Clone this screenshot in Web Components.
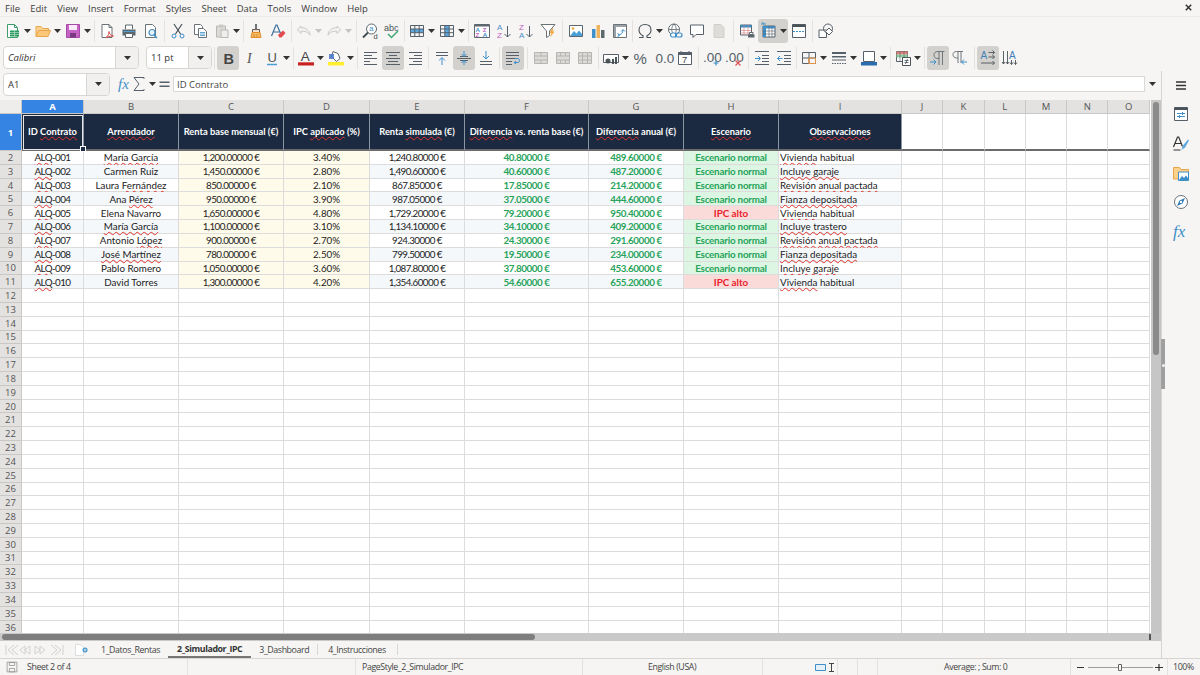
<!DOCTYPE html>
<html lang="en">
<head>
<meta charset="utf-8">
<title>2_Simulador_IPC</title>
<style>
html, body { margin: 0; padding: 0; height: 100%; overflow: hidden; }
body { font-family: "Open Sans", "Liberation Sans", sans-serif; background: #f6f5f3; }
</style>
</head>
<body>
<calc-app>
  <menu-bar></menu-bar>
  <tool-bar>
    <tool-btn i="new" dd></tool-btn><tool-btn i="open" dd></tool-btn><tool-btn i="save" dd></tool-btn><tool-sep w="4"></tool-sep>
    <tool-btn i="pdf"></tool-btn><tool-btn i="print"></tool-btn><tool-btn i="preview"></tool-btn><tool-sep></tool-sep>
    <tool-btn i="cut"></tool-btn><tool-btn i="copy"></tool-btn><tool-btn i="paste" dd></tool-btn><tool-sep w="4"></tool-sep>
    <tool-btn i="brush"></tool-btn><tool-btn i="clear"></tool-btn><tool-sep w="4"></tool-sep>
    <tool-btn i="undo" dd off></tool-btn><tool-btn i="redo" dd off></tool-btn><tool-sep w="6"></tool-sep>
    <tool-btn i="find"></tool-btn><tool-btn i="spell"></tool-btn><tool-sep w="3"></tool-sep>
    <tool-btn i="rows" dd></tool-btn><tool-btn i="cols" dd></tool-btn><tool-sep></tool-sep>
    <tool-btn i="sort"></tool-btn><tool-btn i="asc"></tool-btn><tool-btn i="desc"></tool-btn><tool-btn i="filter"></tool-btn><tool-sep w="6"></tool-sep>
    <tool-btn i="image"></tool-btn><tool-btn i="chart"></tool-btn><tool-btn i="pivot"></tool-btn><tool-sep w="3"></tool-sep>
    <tool-btn i="omega" dd></tool-btn><tool-btn i="link"></tool-btn><tool-btn i="comment"></tool-btn><tool-btn i="headers"></tool-btn><tool-sep w="6"></tool-sep>
    <tool-btn i="area"></tool-btn><tool-btn i="freeze" dd on></tool-btn><tool-btn i="split"></tool-btn><tool-sep></tool-sep>
    <tool-btn i="shapes"></tool-btn>
  </tool-bar>
  <tool-bar>
    <combo-box w="136" arrow="23" italic>Calibri</combo-box><tool-gap></tool-gap>
    <combo-box w="66" arrow="23">11 pt</combo-box><tool-sep></tool-sep>
    <tool-btn i="bold" on></tool-btn><tool-btn i="italic"></tool-btn><tool-btn i="under" dd></tool-btn><tool-sep w="4"></tool-sep>
    <tool-btn i="fcolor" dd></tool-btn><tool-btn i="bcolor" dd></tool-btn><tool-sep></tool-sep>
    <tool-btn i="left"></tool-btn><tool-btn i="center" on></tool-btn><tool-btn i="right"></tool-btn><tool-sep></tool-sep>
    <tool-btn i="top"></tool-btn><tool-btn i="middle" on></tool-btn><tool-btn i="bottom"></tool-btn><tool-sep></tool-sep>
    <tool-btn i="wrap" on></tool-btn><tool-sep w="6"></tool-sep>
    <tool-btn i="merge"></tool-btn><tool-btn i="merge2"></tool-btn><tool-btn i="merge3"></tool-btn><tool-sep w="4"></tool-sep>
    <tool-btn i="money" dd></tool-btn><tool-btn i="percent"></tool-btn><tool-btn i="num"></tool-btn><tool-btn i="date"></tool-btn><tool-sep></tool-sep>
    <tool-btn i="addd"></tool-btn><tool-btn i="deld"></tool-btn><tool-sep w="6"></tool-sep>
    <tool-btn i="indent"></tool-btn><tool-btn i="outdent"></tool-btn><tool-sep w="3"></tool-sep>
    <tool-btn i="borders" dd></tool-btn><tool-btn i="bstyle" dd></tool-btn><tool-btn i="bcol" dd></tool-btn><tool-sep w="4"></tool-sep>
    <tool-btn i="cond" dd></tool-btn><tool-sep></tool-sep>
    <tool-btn i="ltr" on></tool-btn><tool-btn i="rtl"></tool-btn><tool-sep w="6"></tool-sep>
    <tool-btn i="horiz" on></tool-btn><tool-btn i="vert"></tool-btn>
  </tool-bar>
  <work-area>
    <formula-bar cell="A1" value="ID Contrato"></formula-bar>
    <sheet-grid></sheet-grid>
    <sheet-tabs></sheet-tabs>
    <side-bar slot="side"></side-bar>
  </work-area>
  <status-bar></status-bar>
</calc-app>

<script>
// toolbar + sidebar icons, all on a 16x16 box
const LINES = (ys, x1, x2, c) => ys.map(y => `<path d="M${x1} ${y}H${x2}" stroke="${c}"/>`).join('');
const TXT = (x, y, s, c, t, w) => `<text x="${x}" y="${y}" font-size="${s}" fill="${c}" font-family="Liberation Sans" font-weight="${w || 400}">${t}</text>`;
const GRID = (c) => `<path d="M1.5 2.5h13v11h-13zM1.5 6h13M1.5 9.7h13M5.8 2.5v11M10.2 2.5v11" fill="none" stroke="${c}"/>`;
const ICONS = {
  new: `<path d="M2.5 1.5h7l3 3v10h-10z" fill="#fff" stroke="#3f9d6f"/><path d="M9.5 1.5v3h3" fill="none" stroke="#3f9d6f"/><path d="M5 7.500h9v6h-9z" fill="#2b9a5e"/><path d="M5 9.500h9M5 11.500h9M9.500 7.500v6" stroke="#cfe9da" stroke-width=".6"/>`,
  open: `<path d="M1 13.500V3.500h5l1.500 2h6v2" fill="#fbd28f" stroke="#e9a54c"/><path d="M1 13.500l2.500-6h12l-2.500 6z" fill="#fbc677" stroke="#e9a54c"/>`,
  save: `<path d="M1.500 1.500h13v13h-13z" fill="#c564c5" stroke="#a848a8"/><path d="M4 2h8v5H4z" fill="#fbeafb"/><path d="M5 10h6v4.500H5z" fill="#7d3a84"/>`,
  pdf: `<path d="M3 1.500h7l3 3v10H3z" fill="#fff" stroke="#6b7377"/><path d="M10 1.500v3h3" fill="none" stroke="#6b7377"/><path d="M7 14.500c2-1 3-4 3-6 0 2 1.500 4 4.500 4.500-2 0-5 .5-7.500 1.500z" fill="none" stroke="#d9534f"/>`,
  print: `<path d="M4.500 6V2h7v4" fill="#fff" stroke="#5d676e"/><path d="M1.500 6.500h13v6h-13z" fill="#5d676e"/><path d="M4.500 10.500h7v4h-7z" fill="#fff" stroke="#5d676e"/><path d="M2.500 8.500h11" stroke="#4a9fd6"/>`,
  preview: `<path d="M2.500 1.500h7l3 3v10h-10z" fill="#fff" stroke="#6b7377"/><circle cx="9" cy="9.500" r="3" fill="#e8f3fb" stroke="#3f8fc9" stroke-width="1.200"/><path d="M11 12l3 3" stroke="#3f8fc9" stroke-width="1.500"/>`,
  cut: `<path d="M4 1l6.500 10M12 1L5.500 11" stroke="#3d4a52" stroke-width="1.100" fill="none"/><circle cx="4" cy="13" r="2" fill="none" stroke="#3f8fc9"/><circle cx="12" cy="13" r="2" fill="none" stroke="#3f8fc9"/>`,
  copy: `<path d="M2.500 1.500h6l2 2v8h-8z" fill="#fff" stroke="#6b7377"/><path d="M6.500 5.500h5l3 3v6h-8z" fill="#fff" stroke="#6b7377"/><path d="M8 9.500h5M8 11h5M8 12.500h5" stroke="#3f8fc9" stroke-width=".8"/>`,
  paste: `<path d="M2.500 3h9v11h-9z" fill="#dcdbd8" stroke="#b9b8b5"/><path d="M5 1.500h4v3H5z" fill="#c9c8c5"/><path d="M7 7h7v7.500H7z" fill="#efeeec" stroke="#b9b8b5"/>`,
  brush: `<path d="M7 1h2v6H7z" fill="#6b7377"/><path d="M4.500 6.500h7v3h-7z" fill="#f0e3cf" stroke="#6b5b4a"/><path d="M4 9.500h8l1 5H3z" fill="#f5b562" stroke="#e08f2b"/><path d="M6 11v3M9 11v3" stroke="#e08f2b"/>`,
  clear: `<path d="M1.500 13L6 2h1l4 9.500M3.500 9h6" fill="none" stroke="#3a6f9e" stroke-width="1.200"/><path d="M8 12l5-4.500 2.500 2.500-4 4.500H9.500z" fill="#e5484d"/>`,
  undo: `<path d="M5 2L1.500 6 5 9.500V7.200c4 0 7 .5 9 4-.5-5-4-7.500-9-7.500z" fill="#f4f3f1" stroke="#c9c8c5" transform="translate(0 1)"/>`,
  redo: `<path d="M11 2l3.500 4L11 9.500V7.200c-4 0-7 .5-9 4 .5-5 4-7.500 9-7.500z" fill="#f4f3f1" stroke="#c9c8c5" transform="translate(0 1)"/>`,
  find: `<circle cx="9.500" cy="6" r="5" fill="#fff" stroke="#5d676e"/><path d="M6 9.500l-5 5" stroke="#3d4a52" stroke-width="1.800"/>` + TXT(7.300, 8.300, 7.500, '#3f8fc9', 'a') + TXT(11.500, 15.500, 7.500, '#3d4a52', 'd'),
  spell: TXT(0, 8, 9, '#4a5358', 'abc') + `<path d="M4 11l3.500 3.500L14 8" fill="none" stroke="#3fa877" stroke-width="1.500"/>`,
  rows: `<path d="M1.500 6h13v3.700h-13z" fill="#5ba7e0"/>` + GRID('#55606a'),
  cols: `<path d="M5.800 2.500h4.400v11H5.800z" fill="#5ba7e0"/>` + GRID('#55606a'),
  sort: `<path d="M.500 1.500h15v13H.500z" fill="#fff" stroke="#5d676e"/><path d="M.500 2h15v1.500H.500z" fill="#5d676e"/>` + TXT(1.500, 9, 6.200, '#4a8fca', 'A', 700) + TXT(1.500, 14.300, 6.200, '#bd5fc4', 'Z', 700) + TXT(8.800, 9, 6.200, '#bd5fc4', 'Z', 700) + TXT(8.800, 14.300, 6.200, '#4a8fca', 'A', 700),
  asc: TXT(1, 7, 8, '#4a8fca', 'A') + TXT(1, 15, 8, '#bd5fc4', 'Z') + `<path d="M11.500 3v11M8.500 11l3 3 3-3" fill="none" stroke="#55606a"/>`,
  desc: TXT(1, 7, 8, '#bd5fc4', 'Z') + TXT(1, 15, 8, '#4a8fca', 'A') + `<path d="M11.500 3v11M8.500 11l3 3 3-3" fill="none" stroke="#55606a"/>`,
  filter: `<path d="M1 1.500h14L9.500 8v4.500l-3 2V8z" fill="#fff" stroke="#6b7377"/><path d="M12 5.500L9.500 10h2L10 14.500l4.500-6h-2l1-3z" fill="#f0a63d"/>`,
  image: `<path d="M1.500 2.500h13v11h-13z" fill="#fff" stroke="#5d676e"/><circle cx="5" cy="5.500" r="1.300" fill="#f0a63d"/><path d="M2 13l4-5 2.500 2.500 2.500-3 3 3.500v2z" fill="#4a9fd6"/>`,
  chart: `<path d="M2 6h3.500v9H2z" fill="#3f8fc9"/><path d="M6.500 2H10v13H6.500z" fill="#f0b45c"/><path d="M11 7h3.500v8H11z" fill="#5d676e"/>`,
  pivot: `<path d="M1.500 1.500h13v13h-13z" fill="#fff" stroke="#6b7377"/><path d="M2 2h12v2H2zM2 2h2v12H2z" fill="#9aa2a7"/><path d="M6 12c3 0 5-2 5-5M9 8.500L11 6.500l2 2M5.500 10l2 2-2 2" fill="none" stroke="#3f8fc9"/>`,
  omega: `<path d="M2 14.500h4v-1.700C3.500 11.500 2 9.500 2 7c0-3.500 2.500-5.500 6-5.500s6 2 6 5.500c0 2.500-1.500 4.500-4 5.800v1.700h4" fill="none" stroke="#4a5358" stroke-width="1.100"/>`,
  link: `<circle cx="7" cy="6.500" r="5.500" fill="#fff" stroke="#5d676e"/><path d="M1.500 6.500h11M7 1c-3 3-3 8 0 11M7 1c3 3 3 8 0 11" fill="none" stroke="#5d676e" stroke-width=".8"/><rect x="3.500" y="10" width="6" height="4" rx="2" fill="#fff" stroke="#3f8fc9" stroke-width="1.200"/><rect x="8.500" y="10" width="6.500" height="4" rx="2" fill="none" stroke="#3f8fc9" stroke-width="1.200"/>`,
  comment: `<path d="M1.500 2h13v9.500H7L4 14.500v-3H1.500z" fill="#fff" stroke="#55606a"/>`,
  headers: `<path d="M3 1.500h7l3 3v10H3z" fill="#dddcd9" stroke="#d0cfcc"/>`,
  area: `<path d="M1.500 2h11v10h-11z" fill="#fff" stroke="#55606a"/><path d="M1.500 2h11v2.500h-11z" fill="#3f8fc9"/><path d="M1.500 7.500h11M1.500 10h11M5 2v10M9 2v10" stroke="#c77" stroke-width=".6"/><path d="M9 11.500h6.500v3H9z" fill="#5d676e"/><path d="M10.500 9.500h3.500v2h-3.500z" fill="#fff" stroke="#5d676e"/>`,
  freeze: `<g transform="translate(-1 -1)"><path d="M3 4h12v11H3z" fill="#fff" stroke="#55606a"/><path d="M3 4h12v2.500H3zM3 4h3v11H3z" fill="#3f8fc9"/><path d="M3 9h12M3 12h12M9 4v11M12 4v11" stroke="#55606a" stroke-width=".6"/><path d="M1 2h5M3 0v2" stroke="#3f8fc9"/></g>`,
  split: `<path d="M1.500 1.500h13v13h-13z" fill="#fff" stroke="#55606a"/><path d="M1.500 1.500h13v2.500h-13z" fill="#4a5358"/><path d="M2 8.500h12" stroke="#3f8fc9" stroke-dasharray="2 1"/>`,
  shapes: `<path d="M1 7h7.500v7.500H1z" fill="#fff" stroke="#55606a"/><circle cx="10" cy="5.500" r="4.500" fill="none" stroke="#55606a"/><path d="M11 5l3.500 3.500-3.500 3.500-3.500-3.500z" fill="#fff" stroke="#55606a"/>`,

  bold: TXT(3.500, 13.500, 14.500, '#454545', 'B', 700),
  italic: `<text x="5" y="13" font-size="14" fill="#555" font-family="Liberation Serif" font-style="italic">I</text>`,
  under: TXT(3.500, 11.500, 13, '#555', 'U') + `<path d="M3 14.500h10" stroke="#4a9fd6" stroke-width="1.500"/>`,
  fcolor: TXT(2.800, 11, 13.500, '#444', 'A') + `<path d="M0 12.300h16v3.200H0z" fill="#c9211e"/>`,
  bcolor: `<path d="M5 1.500l5 2 2 5-3.500 3-5-5z" fill="#fff" stroke="#5d676e"/><path d="M1 4h5v5H1z" fill="#3f6fc9" opacity=".8"/><path d="M0 12h16v3.500H0z" fill="#ffee2e"/>`,
  left: LINES([2.500, 5.500, 8.500, 11.500, 14.500], 1, 14, '#55606a') + `<path d="M9 5.500h5M7 11.500h7" stroke="#f6f5f3"/>`,
  center: LINES([2.500, 5.500, 8.500, 11.500, 14.500], 1, 15, '#55606a') + `<path d="M1 5.500h3M12 5.500h3M1 11.500h2M13 11.500h2" stroke="#d3d1cd"/>`,
  right: LINES([2.500, 5.500, 8.500, 11.500, 14.500], 2, 15, '#55606a') + `<path d="M2 5.500h5M2 11.500h4" stroke="#f6f5f3"/>`,
  top: LINES([2.500, 5.500], 2, 14, '#55606a') + `<path d="M8 15V8M5 10.500l3-3 3 3" fill="none" stroke="#3f8fc9"/>`,
  middle: LINES([8.500], 1, 15, '#55606a') + LINES([6.500, 10.500], 4, 12, '#55606a') + `<path d="M8 1v5M5.500 4l2.500 2.500L10.500 4M8 15v-4M5.500 13L8 10.500l2.500 2.500" fill="none" stroke="#3f8fc9"/>`,
  bottom: LINES([11.500, 14.500], 2, 14, '#55606a') + `<path d="M8 1v7.500M5 6l3 3 3-3" fill="none" stroke="#3f8fc9"/>`,
  wrap: LINES([2.500, 5.500], 1, 14, '#55606a') + LINES([8.500], 1, 10, '#55606a') + LINES([11.500, 14.500], 1, 7, '#55606a') + `<path d="M10 8.500h3c2 0 2 4 0 4H9.500M11 11l-2 1.500 2 1.500" fill="none" stroke="#3f8fc9"/>`,
  merge: `<path d="M1.500 2.500h13v11h-13z" fill="#dcdbd8" stroke="#b5b4b1"/><path d="M1.500 6h13M1.500 10h13M8 2.500V6M8 10v3.500" stroke="#b5b4b1"/>`,
  merge2: `<path d="M1.500 2.500h13v11h-13z" fill="#dcdbd8" stroke="#b5b4b1"/><path d="M1.500 6h13M5.500 2.500V6M10.500 2.500V6M5.500 10v3.500M10.500 10v3.500M1.500 10h13" stroke="#b5b4b1"/>`,
  merge3: `<path d="M1.500 2.500h13v11h-13z" fill="#dcdbd8" stroke="#b5b4b1"/><path d="M1.500 6h13M1.500 10h13M5.500 2.500v11M10.500 2.500v11" stroke="#b5b4b1"/>`,
  money: `<path d="M.500 4.500h15v8H.500z" fill="#fff" stroke="#55606a"/><circle cx="5" cy="11" r="2.500" fill="#4a5358"/><path d="M9 9h2v5H9zM12 7h2v7h-2z" fill="#4a5358"/>`,
  percent: TXT(.500, 13.500, 15, '#55606a', '%'),
  num: TXT(.500, 13, 13.500, '#55606a', '0.0'),
  date: `<path d="M1.500 2.500h13v12h-13z" fill="#fff" stroke="#55606a"/><path d="M1.500 2.500h13v2h-13zM4 1v2M12 1v2" fill="#55606a" stroke="#55606a"/>` + TXT(5, 13, 9.500, '#444', '7'),
  addd: TXT(-1, 12, 13.500, '#55606a', '.00') + `<path d="M12 10.500v5M9.500 13h5" stroke="#3f8fc9" stroke-width="1.200"/>`,
  deld: TXT(-1, 12, 13.500, '#55606a', '.00') + `<path d="M9.500 10.500l5 5M14.500 10.500l-5 5" stroke="#d9534f" stroke-width="1.200"/>`,
  indent: LINES([1.500, 14.500], 1, 15, '#55606a') + LINES([5.500, 8.500, 11.500], 8, 15, '#55606a') + `<path d="M1 8.500h5M4 6l2.500 2.500L4 11" fill="none" stroke="#3f8fc9"/>`,
  outdent: LINES([1.500, 14.500], 1, 15, '#55606a') + LINES([5.500, 8.500, 11.500], 8, 15, '#55606a') + `<path d="M1.500 8.500h5M4 6L1.500 8.500 4 11" fill="none" stroke="#3f8fc9"/>`,
  borders: `<path d="M1.500 2.500h13v11h-13zM8 2.500v11M1.500 8h13" fill="none" stroke="#55606a"/><path d="M8 8v5.500M8 8h6.500v5.500H8z" fill="none" stroke="#e2924a"/>`,
  bstyle: `<path d="M1 2h14v2H1zM1 6h14v1.500H1z" fill="#55606a"/><path d="M1 10h14" stroke="#55606a"/><path d="M1 13.500h14" stroke="#55606a" stroke-dasharray="1.500 1"/>`,
  bcol: `<path d="M2.500 1.500h11v10h-11z" fill="#fff" stroke="#55606a"/><path d="M0 12h16v3.500H0z" fill="#2a6cad"/>`,
  cond: `<path d="M1.500 1.500h11v10h-11z" fill="#fff" stroke="#55606a"/><path d="M1.500 1.500h11v3h-11z" fill="#e0817c"/><path d="M1.500 4.500h11v3h-11z" fill="#8fcb9b"/><path d="M5 1.500v10M9 1.500v10" stroke="#55606a" stroke-width=".6"/><path d="M7.500 7.500h8v8h-8z" fill="#fff" stroke="#4a5358"/><path d="M9.500 10.500h4M9.500 12.500h4M12.500 9l-2 5" stroke="#4a5358" stroke-width=".8"/>`,
  ltr: `<path d="M9 15V1.500M12.500 15V1.500M14.500 1.500H8C5 1.500 4 3 4 5s1 3.500 4 3.500h1" fill="none" stroke="#6f777c"/><path d="M0 12h5.500M3.500 9.500L6 12l-2.500 2.500" fill="none" stroke="#3f8fc9"/>`,
  rtl: `<path d="M5 13V1.500M8 13V1.500M10 1.500H3.500C1 1.500 0 3 0 4.500S1 8 3.500 8H5" fill="none" stroke="#6f777c" transform="translate(1)"/><path d="M15 12H9.500M12 9.500L9.500 12l2.500 2.500" fill="none" stroke="#3f8fc9"/>`,
  horiz: TXT(.500, 8.500, 10, '#3f7fb8', 'A') + `<path d="M8.500 2.500h6M12.500.500l2 2-2 2M8.500 7h6M12.500 5l2 2-2 2M1 13h13.500M12.500 11l2 2-2 2" fill="none" stroke="#4a5358" stroke-width=".9"/>`,
  vert: TXT(7, 8.500, 10, '#3f7fb8', 'A') + `<path d="M1.500 1v13M0 12l1.500 2L3 12M5.500 1v13M4 12l1.500 2L7 12M9.500 10v4.500M8 12.500l1.500 2 1.500-2M13.500 10v4.500M12 12.500l1.500 2 1.500-2" fill="none" stroke="#4a5358" stroke-width=".9"/>`,

  props: `<path d="M1.500 1.500h13v13h-13z" fill="#fff" stroke="#55606a"/><path d="M1.500 1.500h13v2.500h-13z" fill="#4a5358"/><path d="M4 7.500h8M4 10.500h8" stroke="#3f8fc9"/><path d="M9.500 6v3M6.500 9v3" stroke="#3f8fc9"/>`,
  styles: `<path d="M.500 11L4.500 1h1.200l3.800 9.500M2 7.500h6" fill="none" stroke="#333" stroke-width="1.200"/><path d="M.500 14h7" stroke="#333"/><path d="M15 3.500l-5 6-1.500 4.500 3.500-2.500 4-7z" fill="#5ba7e0"/>`,
  gallery: `<path d="M.500 14V2.500h6l1.500 2h7.500V14z" fill="#fad08a" stroke="#e9a54c"/><path d="M5.500 7h10v8.500h-10z" fill="#fff" stroke="#3f8fc9"/><path d="M6 15l3-4 2 2 2-2.500 2 2.500v2z" fill="#3f8fc9"/>`,
  nav: `<circle cx="8" cy="8" r="6.500" fill="#fff" stroke="#6b7377"/><path d="M12 4L9.500 9.500 4 12l2.500-5.500z" fill="#2f79b5"/><circle cx="8" cy="8" r="1.200" fill="#fff"/>`,
  fx: `<text x="0" y="13.500" font-size="17" fill="#3f8fc9" font-family="Liberation Serif" font-style="italic">fx</text>`,
  fxBar: `<text x="1" y="13" font-size="15" fill="#3f8fc9" font-family="Liberation Serif" font-style="italic">fx</text>`,
  sigma: `<path d="M13 3V1.500H3L8 8l-5 6.500h10V13" fill="none" stroke="#55606a" stroke-width="1"/>`,
  equals: `<path d="M2.500 5.500h10v1.600h-10zM2.500 9.500h10v1.600h-10z" fill="#55606a"/>`,
  saveDoc: `<path d="M1.500 1.500h13v13h-13z" fill="#f6f5f3" stroke="#8d8d8d"/><path d="M4.500 2h7v4h-7zM4.500 10h7v4.500h-7z" fill="none" stroke="#8d8d8d"/>`
};
const svgIcon = (name, size = 16) => `<svg xmlns="http://www.w3.org/2000/svg" width="${size}" height="${size}" viewBox="0 0 16 16" style="display:block;overflow:visible">${ICONS[name]}</svg>`;

const ARROW = `<svg width="7" height="4" viewBox="0 0 7 4" style="display:block"><path d="M0 0h7L3.500 4z" fill="#333"/></svg>`;

class CalcApp extends HTMLElement {
  constructor() {
    super();
    this.attachShadow({ mode: 'open' });
    this.shadowRoot.innerHTML = `<style>
      :host { display: flex; flex-direction: column; width: 1200px; height: 675px; overflow: hidden; background: #f6f5f3; color: #333; }
    </style><slot></slot>`;
  }
}

class MenuBar extends HTMLElement {
  constructor() {
    super();
    this.attachShadow({ mode: 'open' });
    const items = ['File', 'Edit', 'View', 'Insert', 'Format', 'Styles', 'Sheet', 'Data', 'Tools', 'Window', 'Help'];
    this.shadowRoot.innerHTML = `<style>
      :host { display: flex; align-items: center; height: 17px; flex: none; border-bottom: 1px solid #ecebe9; box-sizing: border-box; padding-left: 5px; gap: 10.100px; font: 9.500px "Open Sans", sans-serif; color: #3c3c3c; position: relative; }
      #close { position: absolute; right: 8px; top: 4px; }
    </style>${items.map(t => `<span>${t}</span>`).join('')}
    <svg id="close" width="7" height="7" viewBox="0 0 7 7"><path d="M.8.8l5.400 5.400M6.200.8L.8 6.200" stroke="#333" stroke-width="1.500"/></svg>`;
  }
}

class ToolBar extends HTMLElement {
  constructor() {
    super();
    this.attachShadow({ mode: 'open' });
    this.shadowRoot.innerHTML = `<style>
      :host { display: flex; align-items: center; height: 27px; flex: none; box-sizing: border-box; padding-left: 2px; }
      ::slotted(*) { flex: none; }
    </style><slot></slot>`;
  }
}

class ToolBtn extends HTMLElement {
  constructor() {
    super();
    this.attachShadow({ mode: 'open' });
  }
  connectedCallback() {
    const dd = this.hasAttribute('dd');
    const off = this.hasAttribute('off');
    this.shadowRoot.innerHTML = `<style>
      :host { display: flex; align-items: center; height: 24px; border-radius: 3px; width: ${dd ? 30 : 22}px; }
      :host([on]) { background: #d3d1cd; }
      #i { width: 22px; display: flex; justify-content: center; }
      #d { width: 7px; opacity: ${off ? .25 : 1}; }
    </style><div id="i">${svgIcon(this.getAttribute('i'))}</div>${dd ? `<div id="d">${ARROW}</div>` : ''}`;
  }
}

class ToolSep extends HTMLElement {
  constructor() {
    super();
    this.attachShadow({ mode: 'open' });
  }
  connectedCallback() {
    const w = this.getAttribute('w') || 5;
    this.shadowRoot.innerHTML = `<style>
      :host { display: flex; justify-content: center; width: ${w}px; height: 22px; }
      div { width: 1px; background: #e3e2df; }
    </style><div></div>`;
  }
}

class ToolGap extends HTMLElement {
  constructor() {
    super();
    this.attachShadow({ mode: 'open' });
    this.shadowRoot.innerHTML = `<style>:host { display: block; width: 6px; }</style>`;
  }
}

class ComboBox extends HTMLElement {
  constructor() {
    super();
    this.attachShadow({ mode: 'open' });
  }
  connectedCallback() {
    const it = this.hasAttribute('italic');
    this.shadowRoot.innerHTML = `<style>
      :host { display: flex; height: 23px; width: ${this.getAttribute('w')}px; box-sizing: border-box; border: 1px solid #d8d6d3; border-radius: 4px; background: #fff; font: ${it ? 'italic ' : ''}9.500px "Open Sans", sans-serif; color: #333; margin-left: 1px; }
      #t { flex: 1; display: flex; align-items: center; padding-left: 4px; }
      #a { width: ${this.getAttribute('arrow')}px; display: flex; align-items: center; justify-content: center; border-left: 1px solid #d8d6d3; background: #f1f0ee; border-radius: 0 3px 3px 0; box-sizing: border-box; }
    </style><div id="t"><slot></slot></div><div id="a">${ARROW}</div>`;
  }
}

class WorkArea extends HTMLElement {
  constructor() {
    super();
    this.attachShadow({ mode: 'open' });
    this.shadowRoot.innerHTML = `<style>
      :host { display: grid; grid-template-columns: 1162px 38px; flex: 1; min-height: 0; }
      #main { display: flex; flex-direction: column; min-height: 0; border-right: 1px solid #d6d5d2; }
    </style><div id="main"><slot></slot></div><slot name="side"></slot>`;
  }
}

class FormulaBar extends HTMLElement {
  constructor() {
    super();
    this.attachShadow({ mode: 'open' });
  }
  connectedCallback() {
    this.shadowRoot.innerHTML = `<style>
      :host { display: flex; align-items: center; height: 26px; flex: none; box-sizing: border-box; padding-left: 2px; font: 9.500px "Open Sans", sans-serif; color: #444; }
      #name { margin-right: 8px; }
      .b { width: 14px; display: flex; justify-content: center; flex: none; }
      .d { width: 7px; flex: none; }
      #in { width: 972px; height: 16px; flex: none; box-sizing: border-box; margin-left: 1px; border: 1px solid #dad9d6; background: #fff; display: flex; align-items: center; padding-left: 3px; }
      #end { margin-left: 4px; }
    </style>
    <combo-box id="name" w="107" arrow="23">${this.getAttribute('cell')}</combo-box>
    <div class="b">${svgIcon('fxBar')}</div>
    <div class="b">${svgIcon('sigma')}</div>
    <div class="d" style="margin:0 1px 0 3px">${ARROW}</div>
    <div class="b" style="margin:0 0 0 1px">${svgIcon('equals')}</div>
    <div id="in">${this.getAttribute('value')}</div>
    <div id="end">${ARROW}</div>`;
  }
}

// *word* marks what the spell checker flagged
const mark = s => s.replace(/\*([^*]+)\*/g, '<u>$1</u>');
const HEADS = ['ID *Contrato*', '*Arrendador*', 'Renta base mensual (€)', 'IPC *aplicado* (%)', 'Renta *simulada* (€)', '*Diferencia* vs. renta base (€)', '*Diferencia* anual (€)', '*Escenario*', '*Observaciones*'];
const ROWS = [
  ['*ALQ*-001', '*María García*', '1,200.00000 €', '3.40%', '1,240.80000 €', '40.80000 €', '489.60000 €', 'n', '*Vivienda* habitual'],
  ['*ALQ*-002', 'Carmen Ruiz', '1,450.00000 €', '2.80%', '1,490.60000 €', '40.60000 €', '487.20000 €', 'n', '*Incluye garaje*'],
  ['*ALQ*-003', 'Laura *Fernández*', '850.00000 €', '2.10%', '867.85000 €', '17.85000 €', '214.20000 €', 'n', '*Revisión anual pactada*'],
  ['*ALQ*-004', 'Ana *Pérez*', '950.00000 €', '3.90%', '987.05000 €', '37.05000 €', '444.60000 €', 'n', '*Fianza depositada*'],
  ['*ALQ*-005', 'Elena Navarro', '1,650.00000 €', '4.80%', '1,729.20000 €', '79.20000 €', '950.40000 €', 'a', '*Vivienda* habitual'],
  ['*ALQ*-006', '*María García*', '1,100.00000 €', '3.10%', '1,134.10000 €', '34.10000 €', '409.20000 €', 'n', '*Incluye trastero*'],
  ['*ALQ*-007', 'Antonio *López*', '900.00000 €', '2.70%', '924.30000 €', '24.30000 €', '291.60000 €', 'n', '*Revisión anual pactada*'],
  ['*ALQ*-008', '*José Martínez*', '780.00000 €', '2.50%', '799.50000 €', '19.50000 €', '234.00000 €', 'n', '*Fianza depositada*'],
  ['*ALQ*-009', 'Pablo Romero', '1,050.00000 €', '3.60%', '1,087.80000 €', '37.80000 €', '453.60000 €', 'n', '*Incluye garaje*'],
  ['*ALQ*-010', 'David Torres', '1,300.00000 €', '4.20%', '1,354.60000 €', '54.60000 €', '655.20000 €', 'a', '*Vivienda* habitual']
];
const COLS = 'ABCDEFGHIJKLMNO'.split('');

class SheetGrid extends HTMLElement {
  constructor() {
    super();
    this.attachShadow({ mode: 'open' });
    let h = `<div class="corner"></div>`;
    COLS.forEach((c, i) => { h += `<div class="ch ${i === 0 ? 'sel' : ''}">${c}</div>`; });
    h += `<div class="rh sel top">1</div>`;
    for (let i = 0; i < 15; i++) {
      h += i < 9 ? `<div class="c head ${i === 0 ? 'cur' : ''}"><span>${mark(HEADS[i])}</span>${i === 0 ? '<i></i>' : ''}</div>` : `<div class="c hb"></div>`;
    }
    for (let r = 2; r <= 36; r++) {
      h += `<div class="rh">${r}</div>`;
      const d = ROWS[r - 2];
      for (let i = 0; i < 15; i++) {
        if (!d || i > 8) { h += `<div class="c"></div>`; continue; }
        let cls = r % 2 ? 'alt' : '';
        let t = d[i];
        if (i === 2 || i === 3) cls = 'yel';
        if (i === 0 || i === 2 || i === 4) cls += ' tight';
        if (i === 5 || i === 6) cls += ' gr';
        if (i === 7) { cls = t === 'n' ? 'ok' : 'hi'; t = t === 'n' ? 'Escenario normal' : 'IPC alto'; }
        if (i === 8) cls += ' lft';
        h += `<div class="c ${cls}"><span>${mark(t)}</span></div>`;
      }
    }
    this.shadowRoot.innerHTML = `<style>
      :host { display: block; position: relative; flex: 1; min-height: 0; margin-top: 3px; overflow: hidden; background: #fff; }
      #g { display: grid; grid-template-columns: 22px 62px 95px 105px 86px 95px 124px 95px 95px 123px repeat(6, 41.300px); grid-template-rows: 14px 37px repeat(35, 13.820px); font: 9.800px Lato, "Liberation Sans", sans-serif; color: #222; width: 1151px; overflow: hidden; }
      .corner { background: #eeedeb; border-right: 1px solid #c9c8c5; border-bottom: 1px solid #c9c8c5; }
      .ch, .rh { display: flex; align-items: center; justify-content: center; box-sizing: border-box; background: #e3e2e0; color: #555; border-right: 1px solid #c9c8c5; border-bottom: 1px solid #c9c8c5; font: 9.500px "Open Sans", sans-serif; }
      .sel { background: #3584e4; color: #fff; font-weight: 700; }
      .c { box-sizing: border-box; border-right: 1px solid #dcdcdc; border-bottom: 1px solid #dcdcdc; display: flex; align-items: center; justify-content: center; white-space: nowrap; min-width: 0; }
      .head { background: #1b2a41; color: #fff; font-weight: 700; font-size: 9.300px; border-right: 1px solid #8c95a3; border-bottom: 2px solid #6b6b6b; position: relative; }
      .hb { border-bottom: 2px solid #6b6b6b; }
      .cur { outline: 1px solid #e8e8e8; outline-offset: -2px; }
      .cur i { position: absolute; right: -3px; bottom: -3px; width: 4px; height: 4px; background: #1b2a41; border: 1px solid #fff; z-index: 2; }
      .alt { background: #f4f8fb; }
      .yel { background: #fffbea; }
      .tight { letter-spacing: -.55px; }
      .gr { color: #27a35a; font-weight: 700; letter-spacing: -.4px; }
      .ok { background: #dcf6e3; color: #27a35a; font-weight: 700; letter-spacing: -.2px; }
      .hi { background: #fbdada; color: #e8222a; font-weight: 700; }
      .lft { justify-content: flex-start; padding-left: 1px; }
      u { text-decoration: underline wavy #e0332e 1px; text-underline-offset: 1px; text-decoration-skip-ink: none; }
      #vt { position: absolute; left: 1151px; top: 0; bottom: 0; width: 10px; background: #c6c6c6; }
      #vb { position: absolute; left: 2px; top: 2px; width: 6px; height: 253px; background: #8a8a8a; border-radius: 3px; }
      #ht { position: absolute; left: 0; bottom: 0; width: 1161px; height: 8px; background: #c9c9c9; }
      #hb { position: absolute; left: 2px; top: 1px; width: 533px; height: 6px; background: #7e7e7e; border-radius: 3px; }
      #hm { position: absolute; left: 1149px; top: 1px; width: 2px; height: 6px; background: #555; }
    </style><div id="g">${h}</div>
    <div id="vt"><div id="vb"></div></div>
    <div id="ht"><div id="hb"></div><div id="hm"></div></div>`;
  }
}

class SheetTabs extends HTMLElement {
  constructor() {
    super();
    this.attachShadow({ mode: 'open' });
    this.shadowRoot.innerHTML = `<style>
      :host { display: flex; align-items: stretch; height: 17px; flex: none; font: 8.800px "Open Sans", sans-serif; letter-spacing: -.4px; color: #444; box-sizing: border-box; padding-left: 5px; }
      #nav { width: 61px; display: flex; align-items: center; }
      #add { width: 27px; display: flex; align-items: center; padding-left: 1px; box-sizing: border-box; margin-left: 8px; }
      .t { display: flex; align-items: center; height: 100%; box-sizing: border-box; white-space: nowrap; }
      .on { font-weight: 700; color: #333; padding: 0 9px; margin: 0 8px -1px 8px; border-bottom: 2px solid #777; }
      .s { width: 1px; height: 11px; align-self: center; background: #d8d7d4; margin-right: 10px; }
    </style>
    <div id="nav"><svg width="60" height="12" viewBox="0 0 60 12" fill="none" stroke="#d2d1ce"><path d="M1 1v10M9 1L3 6l6 5M13 1L7 6l6 5M20 2l-5 4 5 4v-8zM25 2l-5 4 5 4zM35 2l5 4-5 4zM30 2l5 4-5 4zM46 1l6 5-6 5M50 1l6 5-6 5M58 1v10"/></svg></div>
    <div id="add"><svg width="14" height="12" viewBox="0 0 14 12"><path d="M.500.500h5l3 3v8h-8z" fill="#fff" stroke="#ddd"/><circle cx="10" cy="6" r="2.500" fill="#3f8fc9"/><path d="M8.500 6h3M10 4.500v3" stroke="#fff" stroke-width=".7"/></svg></div>
    <div class="t">1_Datos_Rentas</div>
    <div class="t on">2_Simulador_IPC</div>
    <div class="t" style="padding-right:8px">3_Dashboard</div><div class="s"></div>
    <div class="t" style="padding-right:11px">4_Instrucciones</div><div class="s"></div>`;
  }
}

class SideBar extends HTMLElement {
  constructor() {
    super();
    this.attachShadow({ mode: 'open' });
    const list = ['props', 'styles', 'gallery', 'nav', 'fx'];
    this.shadowRoot.innerHTML = `<style>
      :host { display: flex; flex-direction: column; align-items: center; position: relative; padding-top: 7px; gap: 13.250px; box-sizing: border-box; }
      #burger { height: 14px; margin-bottom: 1px; display: flex; align-items: center; }
      #grip { position: absolute; left: -1px; top: 268px; width: 4px; height: 50px; background: #9f9f9f; }
      #dot { position: absolute; left: 0px; top: 293px; width: 3px; height: 3px; background: #f4f4f4; border-radius: 50%; }
    </style>
    <div id="grip"></div><div id="dot"></div>
    <div id="burger"><svg width="10" height="9" viewBox="0 0 10 9"><path d="M0 1h10M0 4.500h10M0 8h10" stroke="#333" stroke-width="1.300"/></svg></div>
    ${list.map(n => svgIcon(n)).join('')}`;
  }
}

class StatusBar extends HTMLElement {
  constructor() {
    super();
    this.attachShadow({ mode: 'open' });
    this.shadowRoot.innerHTML = `<style>
      :host { display: flex; align-items: center; height: 17px; flex: none; box-sizing: border-box; border-top: 1px solid #d6d5d2; font: 8.800px "Open Sans", sans-serif; letter-spacing: -.4px; color: #444; }
      .f { height: 100%; box-sizing: border-box; border-right: 1px solid #e3e2df; display: flex; align-items: center; flex: none; white-space: nowrap; }
    </style>
    <div class="f" style="width:188px;padding-left:6px;gap:9px">${svgIcon('saveDoc', 12)}<span>Sheet 2 of 4</span></div>
    <div class="f" style="width:168px"></div>
    <div class="f" style="width:227px;padding-left:6px">PageStyle_2_Simulador_IPC</div>
    <div class="f" style="width:180px;padding-left:65px">English (USA)</div>
    <div class="f" style="width:75px;padding-left:52px;gap:3px">
      <svg width="11" height="7" viewBox="0 0 11 7"><path d="M.5.500h10v6H.5z" fill="#e6f0f8" stroke="#3f8fc9"/></svg>
      <svg width="5" height="9" viewBox="0 0 5 9"><path d="M0 .500h5M0 8.500h5M2.500 0v9" stroke="#444"/></svg></div>
    <div class="f" style="width:20px"></div>
    <div class="f" style="width:20px"></div>
    <div class="f" style="width:193px;padding-left:66px">Average: ; Sum: 0</div>
    <div class="f" style="width:97px;padding-left:6px">
      <svg width="90" height="9" viewBox="0 0 90 9"><path d="M0 4.500h7M78 4.500h8M82 1v7" stroke="#333" stroke-width="1.200"/><path d="M11 4.500h65" stroke="#9d9d9d"/><path d="M41.500 1.500h3v6h-3z" fill="#f6f5f3" stroke="#666"/></svg></div>
    <div class="f" style="border:0;padding-left:5px">100%</div>`;
  }
}

customElements.define('calc-app', CalcApp);
customElements.define('menu-bar', MenuBar);
customElements.define('tool-bar', ToolBar);
customElements.define('tool-btn', ToolBtn);
customElements.define('tool-sep', ToolSep);
customElements.define('tool-gap', ToolGap);
customElements.define('combo-box', ComboBox);
customElements.define('work-area', WorkArea);
customElements.define('formula-bar', FormulaBar);
customElements.define('sheet-grid', SheetGrid);
customElements.define('sheet-tabs', SheetTabs);
customElements.define('side-bar', SideBar);
customElements.define('status-bar', StatusBar);
</script>
</body>
</html>
